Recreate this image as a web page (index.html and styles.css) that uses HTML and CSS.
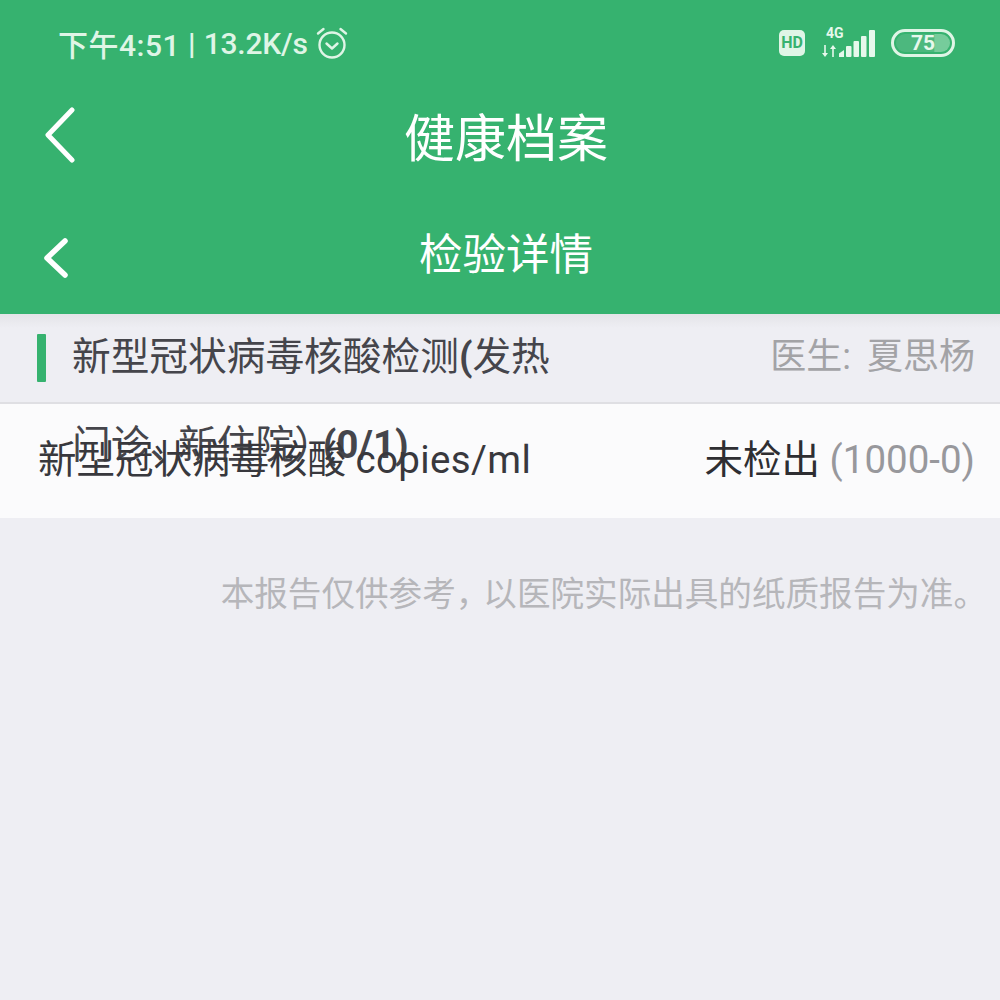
FILE: index.html
```html
<!DOCTYPE html>
<html lang="zh">
<head>
<meta charset="utf-8">
<title>检验详情</title>
<link rel="stylesheet" href="styles.css">
</head>
<body>
<header class="header">
  <div class="status">
    <div class="status-left">
      <span class="clock">下午4:51</span><span class="sep">|</span><span class="speed">13.2K/s</span>
      <svg class="alarm" viewBox="0 0 34 34" fill="none" stroke="#dff5e6" stroke-width="2.4" stroke-linecap="round" stroke-linejoin="round">
        <circle cx="17" cy="19" r="12.5"/>
        <path d="M11.5 17.5 17 22.5 22.5 17.5"/>
        <path d="M3 7.5 8.5 3M31 7.5 25.5 3"/>
      </svg>
    </div>
    <div class="status-right">
      <span class="hd">HD</span>
      <span class="signal">
        <span class="net">4G</span>
        <svg class="bars" viewBox="0 0 54 30" fill="#e6f8ec">
          <path d="M2.200 17h1.600v8H6l-3 4-3-4h2.200z"/>
          <path d="M10.200 29h1.600v-8H14l-3-4-3 4h2.200z"/>
          <path d="M17 29v-3.500l5-3.500v7z"/>
          <rect x="24" y="18" width="5.500" height="11" rx="1"/>
          <rect x="31.500" y="13" width="5.500" height="16" rx="1"/>
          <rect x="39" y="8" width="5.500" height="21" rx="1"/>
          <rect x="47" y="2" width="6" height="27" rx="1"/>
        </svg>
      </span>
      <span class="battery"><span class="level"></span><span class="pct">75</span></span>
    </div>
  </div>
  <div class="nav-main">
    <svg class="chevron-lg" viewBox="0 0 32 56" fill="none" stroke="#fff" stroke-width="5" stroke-linecap="round" stroke-linejoin="round"><path d="M28 3 4 28l24 25"/></svg>
    <h1 class="title-main">健康档案</h1>
  </div>
  <div class="nav-sub">
    <svg class="chevron-sm" viewBox="0 0 26 40" fill="none" stroke="#fff" stroke-width="5.500" stroke-linecap="round" stroke-linejoin="round"><path d="M22 3 4 20l18 17"/></svg>
    <h2 class="title-sub">检验详情</h2>
  </div>
</header>
<main>
  <section class="group-head">
    <span class="marker"></span>
    <div class="group-title">新型冠状病毒核酸检测<b>(</b>发热门诊<span class="tight-comma">、</span>新住院<span class="tight-paren">）</span><b>(0/1)</b></div>
    <div class="doctor">医生: 夏思杨</div>
  </section>
  <section class="row">
    <div class="item">新型冠状病毒核酸 <span class="unit">copies/ml</span></div>
    <div class="result">未检出 <span class="range">(1000-0)</span></div>
  </section>
  <p class="note">本报告仅供参考<span class="note-comma">，</span>以医院实际出具的纸质报告为准。</p>
</main>
</body>
</html>
```

FILE: styles.css
```css
* { box-sizing: border-box; }
html, body { margin: 0; padding: 0; }
body {
  width: 1000px;
  height: 1000px;
  overflow: hidden;
  background: #eeeef3;
  font-family: Roboto, "Noto Sans CJK SC", sans-serif;
}
.header { background: #36b26f; height: 314px; color: #fff; }
.status {
  height: 90px;
  padding: 0 45px 4px 58px;
  display: flex;
  align-items: center;
  justify-content: space-between;
}
.status-left {
  display: flex;
  align-items: center;
  font-size: 30px;
  font-weight: 500;
  color: #dff5e6;
}
.clock { letter-spacing: 0.5px; }
.sep { margin: 0 8px 0 8px; font-weight: 700; }
.speed { letter-spacing: -0.2px; }
.alarm { width: 34px; height: 34px; margin-left: 7px; }
.status-right { display: flex; align-items: center; }
.hd {
  width: 26px;
  height: 26px;
  border-radius: 5px;
  background: #dff5e6;
  color: #36b26f;
  font-size: 16px;
  font-weight: 700;
  line-height: 26px;
  text-align: center;
  margin-right: 17px;
}
.signal { position: relative; display: block; width: 54px; height: 30px; margin-right: 15px; }
.net {
  position: absolute;
  left: 4px;
  top: -2px;
  font-size: 14px;
  font-weight: 700;
  line-height: 14px;
  color: #e6f8ec;
}
.bars { display: block; width: 54px; height: 30px; }
.battery {
  position: relative;
  width: 64px;
  height: 28px;
  border: 3px solid #dff5e6;
  border-radius: 14px;
  overflow: hidden;
  display: block;
}
.level { position: absolute; left: 2px; top: 2px; bottom: 2px; right: 2px; background: linear-gradient(90deg, #4cb87e 70%, #76cc9b 72%); border-radius: 10px; }
.pct {
  position: absolute;
  left: 0;
  right: 0;
  top: 0;
  text-align: center;
  font-size: 21px;
  line-height: 22px;
  font-weight: 700;
  color: #e6f8ec;
}
.nav-main, .nav-sub { position: relative; display: flex; justify-content: center; align-items: center; }
.nav-main { height: 92px; padding: 8px 0 0 12px; }
.nav-sub { height: 132px; padding: 16px 0 0 12px; }
.title-main { margin: 0; font-size: 51px; font-weight: 400; line-height: 60px; }
.title-sub { margin: 0; font-size: 43.500px; font-weight: 400; line-height: 50px; }
.chevron-lg { position: absolute; left: 44px; top: 17px; width: 32px; height: 56px; }
.chevron-sm { position: absolute; left: 43px; top: 56px; width: 26px; height: 40px; }

.group-head {
  height: 90px;
  display: flex;
  align-items: flex-start;
  background: linear-gradient(#e4e4e8, #eeeef3 14px);
  border-bottom: 2px solid #dfdfe3;
  padding: 20px 25px 0 37px;
}
.marker { width: 9px; height: 48px; background: #36b26f; border-radius: 1px; flex: none; }
.group-title {
  width: 490px;
  margin: -21px 0 0 26px;
  font-size: 38.700px;
  line-height: 88px;
  color: #45454b;
  flex: none;
}
.group-title b { font-weight: 700; }
.tight-comma { letter-spacing: -10px; }
.tight-paren { letter-spacing: -10px; }
.doctor {
  margin-left: auto;
  margin-top: -21px;
  font-size: 36px;
  line-height: 88px;
  word-spacing: 7px;
  white-space: nowrap;
  color: #a3a3a6;
}
.row {
  height: 114px;
  background: #fbfbfc;
  display: flex;
  align-items: center;
  justify-content: space-between;
  padding: 0 25px 10px 38px;
  font-size: 38.500px;
  color: #38383d;
}
.item { white-space: nowrap; }
.unit { letter-spacing: 0.35px; }
.result { color: #2e2e32; white-space: nowrap; }
.range { color: #98989c; }
.note {
  margin: 54px 13px 0 0;
  text-align: right;
  font-size: 33.600px;
  line-height: 46px;
  color: #b6b6ba;
  white-space: nowrap;
}
.note-comma { letter-spacing: -6px; }
```
